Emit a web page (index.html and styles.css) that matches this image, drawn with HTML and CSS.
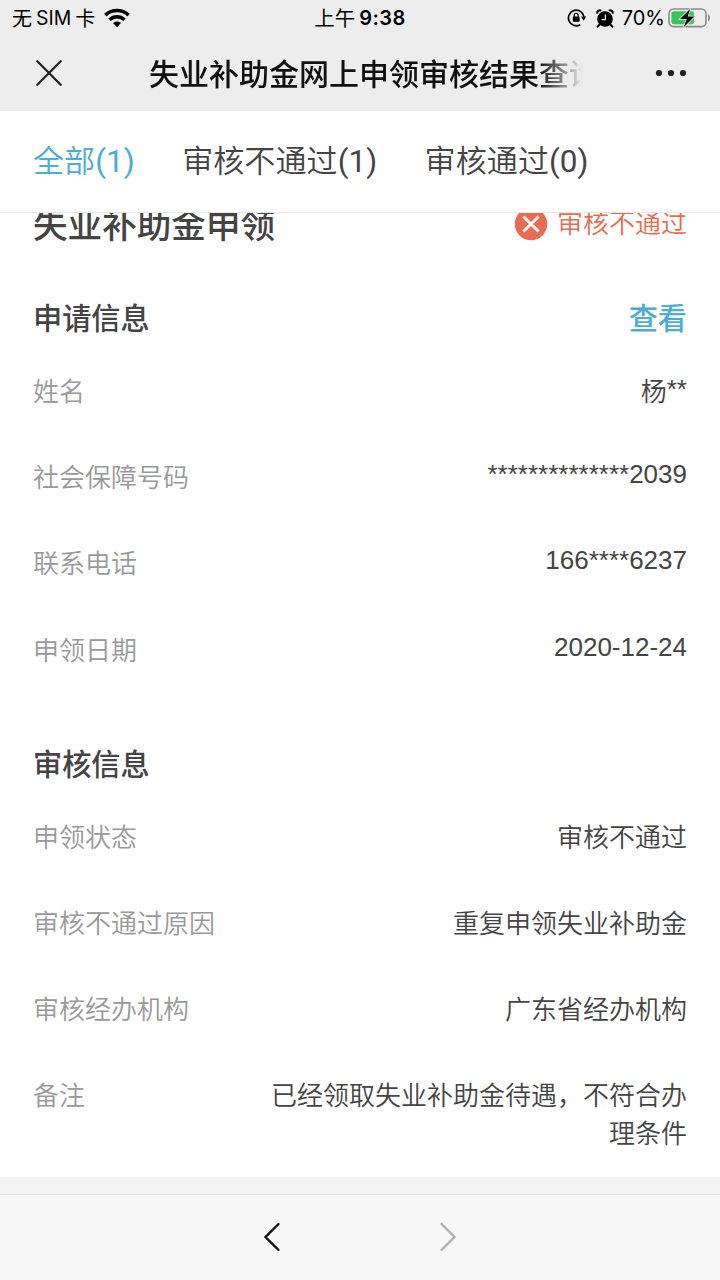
FILE: index.html
```html
<!DOCTYPE html>
<html lang="zh-CN">
<head>
<meta charset="utf-8">
<title>失业补助金网上申领审核结果查询</title>
<link rel="stylesheet" href="styles.css">
</head>
<body>
<div class="screen">
  <header class="top">
    <div class="status">
      <div class="carrier"><span class="cjk">无</span><span class="sim">SIM</span><span class="cjk">卡</span>
        <svg class="wifi" width="26" height="20" viewBox="0 0 26 20"><g fill="none" stroke="#000" stroke-width="3.6"><path d="M1.3 7.1C7.8.9 18.2.9 24.7 7.1"/><path d="M5.5 11.7C9.8 7.7 16.2 7.7 20.5 11.7"/></g><path d="M13 19.2l-4-4.1c2.2-2.1 5.8-2.1 8 0z"/></svg>
      </div>
      <div class="clock"><span class="cjk">上午</span><span class="time">9:38</span></div>
      <div class="indicators">
        <svg width="20" height="20" viewBox="0 0 20 20"><path d="M13.2 16.7A7.8 7.8 0 1 1 17 9" fill="none" stroke="#000" stroke-width="1.7"/><path d="M14 8.6h5.2l-2.6 4.2z"/><rect x="5.8" y="8.6" width="6.8" height="5.2" rx=".8"/><path d="M7.2 9V7.4a2 2 0 0 1 4 0V9" fill="none" stroke="#000" stroke-width="1.2"/></svg>
        <svg class="alarm" width="18" height="19" viewBox="0 0 18 19"><circle cx="9" cy="10" r="7.8"/><path d="M1.2 4.6A2.8 2.8 0 0 1 5.2 1.6M12.8 1.6a2.8 2.8 0 0 1 4 3" fill="none" stroke="#000" stroke-width="2"/><path d="M4 15l-2.3 2.7M14 15l2.3 2.7" stroke="#000" stroke-width="2" stroke-linecap="round"/><path d="M9.4 5.6v5H5.6" fill="none" stroke="#eee" stroke-width="1.3"/></svg>
        <span class="percent">70%</span>
        <svg class="battery" width="44" height="22" viewBox="0 0 44 22"><rect x="1" y="2" width="37" height="17.6" rx="4.6" fill="none" stroke="#8c8c8c" stroke-width="1.6"/><path d="M40 7.3c2.7 1 2.7 6 0 7z" fill="#8c8c8c"/><rect x="3.4" y="4.3" width="22.6" height="13" rx="2.4" fill="#35c759"/><path d="M22.3 1.7L12 12h6.8l-3.1 8.2L26.5 9.6h-6.8z" stroke="#ececec" stroke-width="1.6" paint-order="stroke"/></svg>
      </div>
    </div>
    <div class="nav">
      <svg class="close" width="28" height="28" viewBox="0 0 28 28"><path d="M2.3 2.3l23.4 23.4M25.7 2.3L2.3 25.7" fill="none" stroke="#222" stroke-width="2.3" stroke-linecap="round"/></svg>
      <h1 class="title">失业补助金网上申领审核结果查询</h1>
      <svg class="more" width="32" height="8" viewBox="0 0 32 8" fill="#222"><circle cx="4" cy="4" r="3.1"/><circle cx="16" cy="4" r="3.1"/><circle cx="28" cy="4" r="3.1"/></svg>
    </div>
  </header>
  <nav class="tabs"><span class="tab active">全部<span class="count">(1)</span></span><span class="tab">审核不通过<span class="count">(1)</span></span><span class="tab">审核通过<span class="count">(0)</span></span></nav>
  <main class="content">
    <div class="card-head">
      <h2>失业补助金申领</h2>
      <div class="result"><svg width="34" height="34" viewBox="0 0 34 34"><circle cx="17" cy="17" r="16.2" fill="#eb6b50"/><path d="M9.4 9.4l15.2 15.2M24.6 9.4L9.4 24.6" stroke="#fff" stroke-width="2.8"/></svg><span>审核不通过</span></div>
    </div>
    <section class="apply">
      <div class="section-head"><h3>申请信息</h3><a class="view">查看</a></div>
      <dl>
        <div class="row"><dt>姓名</dt><dd>杨<span class="mask">**</span></dd></div>
        <div class="row"><dt>社会保障号码</dt><dd class="latin">**************2039</dd></div>
        <div class="row"><dt>联系电话</dt><dd class="latin">166****6237</dd></div>
        <div class="row"><dt>申领日期</dt><dd class="latin">2020-12-24</dd></div>
      </dl>
    </section>
    <section class="review">
      <div class="section-head"><h3>审核信息</h3></div>
      <dl>
        <div class="row"><dt>申领状态</dt><dd>审核不通过</dd></div>
        <div class="row"><dt>审核不通过原因</dt><dd>重复申领失业补助金</dd></div>
        <div class="row"><dt>审核经办机构</dt><dd>广东省经办机构</dd></div>
        <div class="row"><dt>备注</dt><dd>已经领取失业补助金待遇，不符合办理条件</dd></div>
      </dl>
    </section>
  </main>
  <footer class="toolbar">
    <svg width="18" height="30" viewBox="0 0 18 30"><path d="M15.5 2L2.5 15l13 13" fill="none" stroke="#111" stroke-width="2.4" stroke-linecap="round"/></svg>
    <svg width="18" height="30" viewBox="0 0 18 30"><path d="M2.5 2l13 13-13 13" fill="none" stroke="#b0b0b0" stroke-width="2.4" stroke-linecap="round"/></svg>
  </footer>
</div>
</body>
</html>
```

FILE: styles.css
```css
* { box-sizing: border-box; }
body, h1, h2, h3, dl, dd { margin: 0; }
body { font-family: "Liberation Sans", "Noto Sans CJK SC", sans-serif; color: #444; background: #f3f3f3; }
svg { display: block; flex: none; }
.screen { width: 720px; height: 1280px; display: flex; flex-direction: column; overflow: hidden; }

.top { height: 111px; flex: none; background: #ededed; color: #000; }
.status { height: 36px; display: grid; grid-template-columns: 1fr auto 1fr; align-items: center; padding: 0 8px 0 12px; }
.carrier, .clock, .indicators { display: flex; align-items: center; white-space: nowrap; }
.cjk { font: 20px/36px "Noto Sans CJK SC", sans-serif; }
.sim { font: 19.4px/36px Inter, sans-serif; margin: 0 4px 0 4px; }
.wifi { margin-left: 9px; }
.clock { margin-left: -4px; }
.clock .cjk { font-size: 20.5px; line-height: 34px; padding-bottom: 2px; }
.time { font: 600 20px/36px Inter, sans-serif; margin-left: 4px; letter-spacing: .5px; }
.indicators { justify-content: flex-end; }
.alarm { margin-left: 9px; }
.percent { font: 20px/36px Inter, sans-serif; margin: 0 3px 0 8px; }

.nav { height: 75px; display: flex; align-items: flex-start; padding: 13px 32px 0 35px; }
.close { margin-top: 10px; }
.title { width: 434px; height: 46px; margin-left: 86px; overflow: hidden; white-space: nowrap; font: 500 30px/46px "Noto Sans CJK SC", sans-serif; color: #111; -webkit-mask-image: linear-gradient(to right, #000 390px, transparent 434px); mask-image: linear-gradient(to right, #000 390px, transparent 434px); }
.more { margin: 20px 1px 0 auto; }

.tabs { height: 102px; flex: none; display: flex; gap: 47.5px; padding-left: 33px; background: #fff; border-bottom: 1px solid #e8e8e8; font: 350 31.1px/102px Roboto, "Noto Sans CJK SC", sans-serif; }
.count { font-size: 31.5px; font-weight: 400; line-height: 1; }
.tabs .active { color: #4bacd8; }

.content { height: 964px; flex: none; overflow: hidden; background: #fff; padding: 0 33px; }
.card-head { display: flex; justify-content: space-between; align-items: center; height: 50px; margin-top: -14px; }
h2 { font: 500 34.6px/50px "Noto Sans CJK SC", sans-serif; margin-top: -3px; }
.result { display: flex; align-items: center; gap: 9px; font-size: 26px; font-weight: 350; line-height: 50px; color: #eb6b50; }
.section-head { display: flex; justify-content: space-between; font: 500 29.2px/44px "Noto Sans CJK SC", sans-serif; }
h3 { font: inherit; }
.view { color: #4bacd8; }
.apply { padding-top: 45px; }
.review { padding-top: 70px; }
dl { display: flex; flex-direction: column; gap: 48.2px; padding-top: 35px; }
.row { display: flex; justify-content: space-between; font-size: 26px; font-weight: 350; line-height: 38px; }
dt { color: #999; }
dd { max-width: 420px; text-align: right; }
.mask { line-height: 1; vertical-align: 3px; }
.latin { line-height: 30px; }

.toolbar { height: 86px; flex: none; margin-top: auto; display: flex; justify-content: center; align-items: center; gap: 158px; padding-bottom: 1px; background: #f7f7f7; border-top: 1px solid #e2e2e2; }
```
